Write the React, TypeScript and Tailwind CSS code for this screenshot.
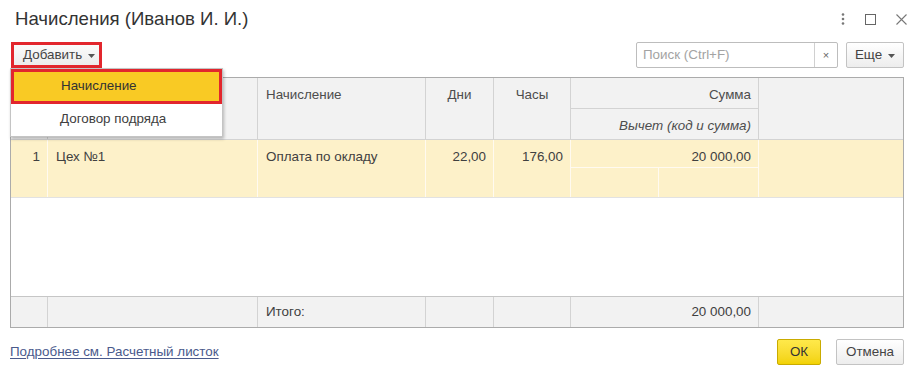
import {useState} from 'react';

const font = {fontFamily: '"Liberation Sans", Arial, sans-serif'};

const Caret = () => (
  <svg width="7" height="4" viewBox="0 0 7 4" className="ml-[6px] mt-[2px]">
    <path d="M0 0h7L3.5 4z" fill="#555" />
  </svg>
);

const WindowIcons = () => (
  <div className="flex items-center gap-[20px] pr-[9px] text-[#777]">
    <svg width="4" height="12" viewBox="0 0 4 12">
      <circle cx="2" cy="1.5" r="1.3" fill="#777" />
      <circle cx="2" cy="6" r="1.3" fill="#777" />
      <circle cx="2" cy="10.5" r="1.3" fill="#777" />
    </svg>
    <svg width="11" height="11" viewBox="0 0 11 11">
      <rect x="0.5" y="0.5" width="10" height="10" fill="none" stroke="#666" />
    </svg>
    <svg width="11" height="11" viewBox="0 0 11 11">
      <path d="M0.5 0.5l10 10M10.5 0.5l-10 10" stroke="#777" strokeWidth="1.1" />
    </svg>
  </div>
);

const App = () => {
  const [menuOpen, setMenuOpen] = useState(true);

  const head = 'bg-[#f2f2f2] border-r border-b border-[#d3d3d3] text-[13.4px] text-[#4d4d4d]';
  const cell = 'border-r border-b border-[#fffaf0] text-[13.4px] text-[#404040]';
  const foot = 'border-r border-[#d3d3d3] text-[13.4px] text-[#404040] flex items-center';

  return (
    <div className="w-[916px] h-[367px] bg-white overflow-hidden relative" style={font}>
      <div className="h-[38px] flex items-center justify-between pl-[15px]">
        <h1 className="text-[18.6px] text-[#333] leading-none">Начисления (Иванов И. И.)</h1>
        <WindowIcons />
      </div>

      <div className="mt-[4px] h-[26px] flex items-center justify-between pl-[11px] pr-[12px]">
        <div className="h-[26px] w-[91px] border-[3px] border-[#e2262d] bg-[#e2262d]">
          <button
            onClick={() => setMenuOpen(!menuOpen)}
            className="w-full h-full flex items-center pl-[9px] bg-gradient-to-b from-[#fbfbfb] to-[#ececec] text-[13.4px] text-[#444]"
          >
            Добавить
            <Caret />
          </button>
        </div>

        <div className="flex items-center">
          <div className="h-[26px] w-[202px] flex border border-[#bdbdbd] rounded-[2px] bg-white">
            <input
              placeholder="Поиск (Ctrl+F)"
              className="flex-1 min-w-0 px-[6px] text-[13.4px] outline-none placeholder:text-[#a3a3a3]"
              style={font}
            />
            <div className="w-[23px] border-l border-[#d0d0d0] flex items-center justify-center text-[11px] text-[#666]">
              ×
            </div>
          </div>
          <button className="ml-[8px] h-[26px] w-[58px] flex items-center justify-center border border-[#c3c3c3] rounded-[2px] bg-gradient-to-b from-white to-[#ededed] text-[13.4px] text-[#444]">
            Еще
            <Caret />
          </button>
        </div>
      </div>

      <div className="mt-[9px] ml-[10px] w-[894px] h-[251px] border border-[#ababab] flex flex-col">
        <div className="grid grid-cols-[37px_210px_168px_68px_77px_88px_100px_144px] grid-rows-[31px_31px]">
          <div className={`${head} row-span-2`} />
          <div className={`${head} row-span-2`} />
          <div className={`${head} row-span-2 pl-2 pt-[7px]`}>Начисление</div>
          <div className={`${head} row-span-2 pt-[7px] text-center`}>Дни</div>
          <div className={`${head} row-span-2 pt-[7px] text-center`}>Часы</div>
          <div className={`${head} col-span-2 pr-[7px] pt-[7px] text-right`}>Сумма</div>
          <div className={`${head} row-span-2 border-r-0`} />
          <div className={`${head} col-span-2 pr-[7px] pt-[7px] text-right italic`}>Вычет (код и сумма)</div>
        </div>

        <div className="grid grid-cols-[37px_210px_168px_68px_77px_88px_100px_144px] grid-rows-[28px_29px] bg-[#fdf1c9] border-b border-[#e2e2e2]">
          <div className={`${cell} row-span-2 pr-[7px] pt-[7px] text-right border-b-0`}>1</div>
          <div className={`${cell} row-span-2 pl-2 pt-[7px] border-b-0`}>Цех №1</div>
          <div className={`${cell} row-span-2 pl-2 pt-[7px] border-b-0`}>Оплата по окладу</div>
          <div className={`${cell} row-span-2 pr-[7px] pt-[7px] text-right border-b-0`}>22,00</div>
          <div className={`${cell} row-span-2 pr-[7px] pt-[7px] text-right border-b-0`}>176,00</div>
          <div className={`${cell} col-span-2 pr-[7px] pt-[7px] text-right`}>20 000,00</div>
          <div className={`${cell} row-span-2 border-r-0 border-b-0`} />
          <div className={`${cell} border-b-0`} />
          <div className={`${cell} border-b-0`} />
        </div>

        <div className="flex-1" />

        <div className="h-[31px] border-t border-[#c6c6c6] bg-[#f2f2f2] grid grid-cols-[37px_210px_168px_68px_77px_188px_144px]">
          <div className={foot} />
          <div className={foot} />
          <div className={`${foot} pl-2`}>Итого:</div>
          <div className={foot} />
          <div className={foot} />
          <div className={`${foot} justify-end pr-[7px]`}>20 000,00</div>
          <div className={`${foot} border-r-0`} />
        </div>
      </div>

      <div className="mt-[11px] flex items-center justify-between pl-[10px] pr-[12px]">
        <a href="#" className="text-[13.4px] text-[#4a5a8c] underline underline-offset-2">
          Подробнее см. Расчетный листок
        </a>
        <div className="flex items-center gap-[15px]">
          <button className="h-[26px] w-[44px] border border-[#c9ab00] rounded-[2px] bg-gradient-to-b from-[#ffe94a] to-[#f2d200] text-[13.4px] text-[#333]">
            ОК
          </button>
          <button className="h-[26px] w-[68px] border border-[#c3c3c3] rounded-[2px] bg-gradient-to-b from-white to-[#ededed] text-[13.4px] text-[#444]">
            Отмена
          </button>
        </div>
      </div>

      {menuOpen && (
        <div className="absolute left-[10px] top-[68px] w-[213px] h-[69px] bg-white border border-[#c4c4c4] shadow-[1px_2px_3px_rgba(0,0,0,0.25)]">
          <div className="h-[35px] border-[3px] border-[#e2262d] bg-[#f9ca24] flex items-center pl-[47px] text-[13.4px] text-[#333]">
            Начисление
          </div>
          <div className="h-[31px] flex items-center pl-[49px] text-[13.4px] text-[#404040]">
            Договор подряда
          </div>
        </div>
      )}
    </div>
  );
};

export default App;
